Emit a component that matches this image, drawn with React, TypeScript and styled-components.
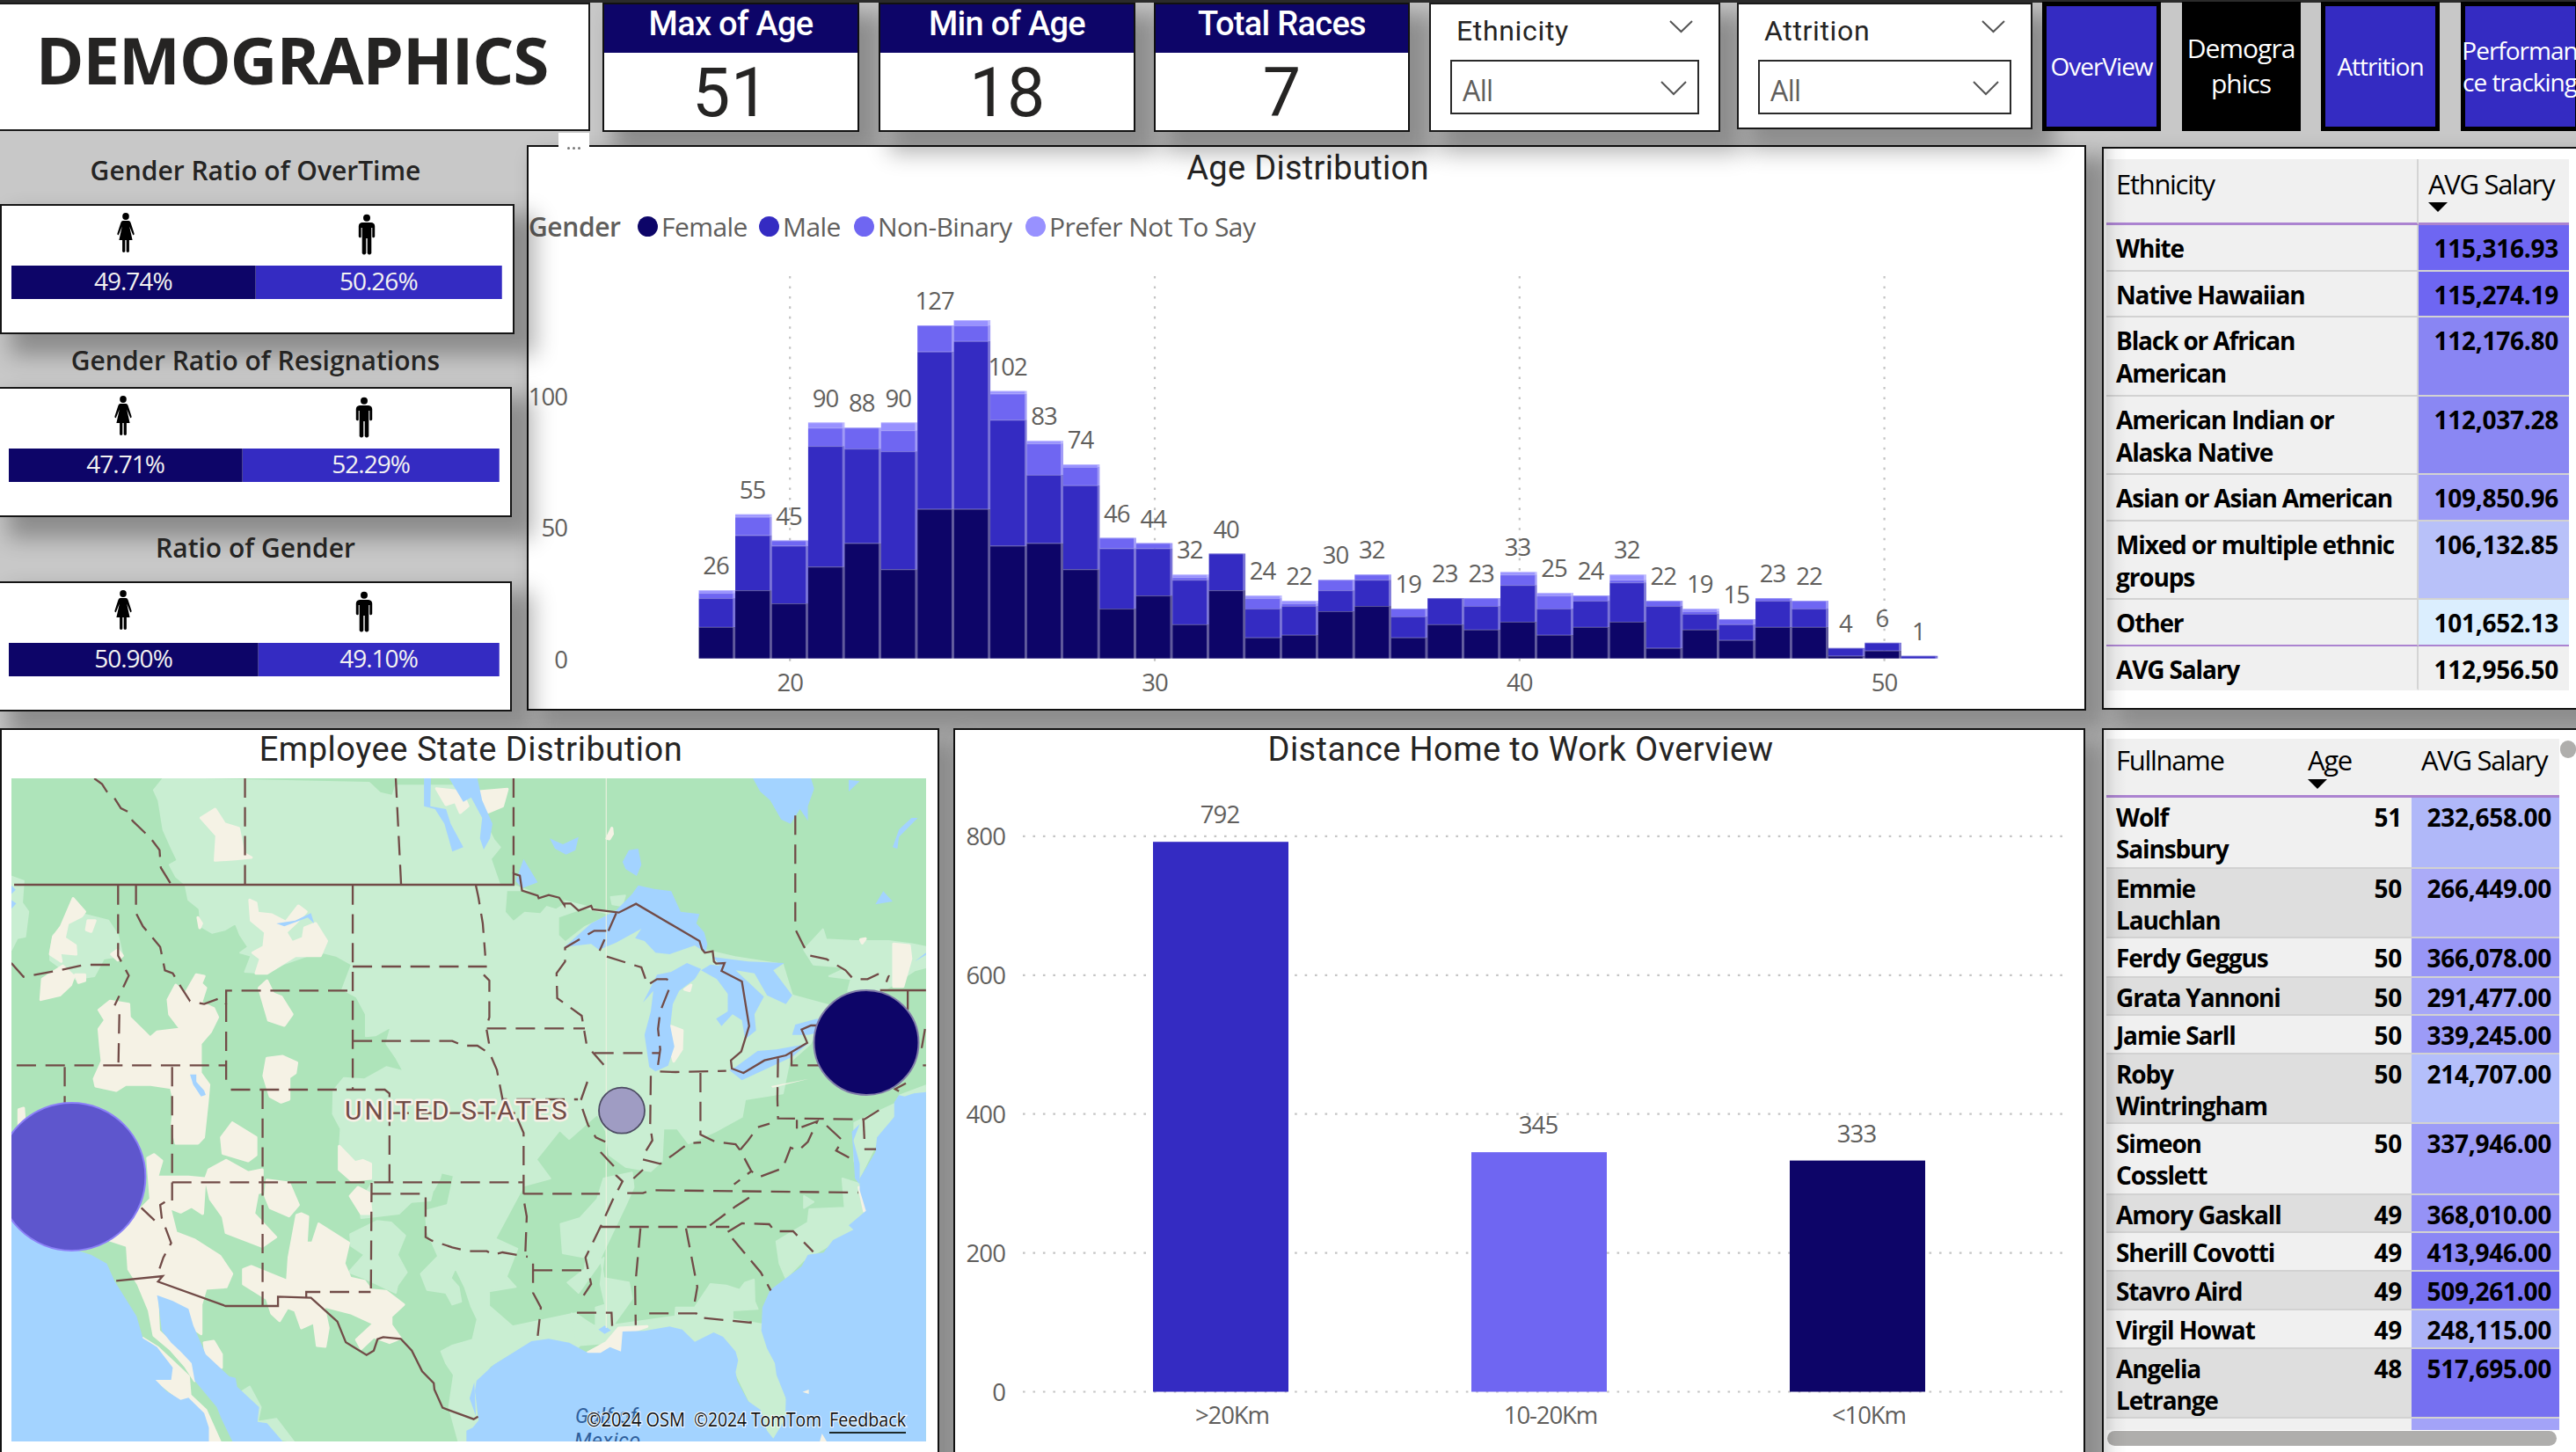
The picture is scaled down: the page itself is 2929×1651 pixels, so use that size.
import React from 'react';
import styled, { createGlobalStyle } from 'styled-components';

const UI = '"Open Sans", "Noto Sans", sans-serif';
const DIN = 'Roboto, "Liberation Sans", sans-serif';
const NAVY = '#0d0568';
const BLUE = '#342bc2';
const VIOLET = '#6f66f2';
const LILAC = '#9891ff';
const SHADOW = '18px 18px 24px 6px rgba(0, 0, 0, 0.3)';

const GlobalStyle = createGlobalStyle`
  html, body { margin: 0; padding: 0; overflow: hidden; }
  * { box-sizing: border-box; }
`;

const Page = styled.div`
  display: flex;
  flex-direction: column;
  width: 2929px;
  height: 1651px;
  overflow: hidden;
  background: #c8c8c8;
  font-family: ${UI};
  color: #252423;
`;

const TopStrip = styled.div`
  height: 3px;
  flex: none;
  background: #2b2b2b;
  position: relative;
  z-index: 5;
`;

const TopRow = styled.header`
  display: flex;
  align-items: flex-start;
  height: 163px;
  flex: none;
`;

const PageTitle = styled.h1`
  position: relative;
  z-index: 2;
  flex: none;
  margin: 0 14px 0 -2px;
  padding-right: 5px;
  width: 673px;
  height: 146px;
  border: 2px solid #1a1a1a;
  background: #fff;
  text-align: center;
  font-size: 74px;
  font-weight: 700;
  line-height: 126px;
  letter-spacing: -0.95px;
`;

const Card = styled.section<{ $width: number; $gap: number; $z: number }>`
  position: relative;
  z-index: ${(p) => p.$z};
  flex: none;
  width: ${(p) => p.$width}px;
  height: 147px;
  margin-right: ${(p) => p.$gap}px;
  border: 2px solid #111;
  background: #fff;
  box-shadow: ${SHADOW};
  font-family: ${DIN};
  text-align: center;
`;

const CardHeader = styled.div`
  height: 55px;
  background: ${NAVY};
  color: #fff;
  font-size: 38px;
  font-weight: 500;
  line-height: 44px;
  letter-spacing: -0.7px;
`;

const CardValue = styled.div<{ $spacing: number }>`
  font-size: 77px;
  line-height: 92px;
  height: 86px;
  letter-spacing: ${(p) => p.$spacing}px;
`;

const SlicerBox = styled.section<{ $width: number; $height: number; $gap: number }>`
  position: relative;
  z-index: 4;
  flex: none;
  width: ${(p) => p.$width}px;
  height: ${(p) => p.$height}px;
  margin-right: ${(p) => p.$gap}px;
  padding: 0 22px;
  border: 2px solid #1a1a1a;
  background: #fff;
  box-shadow: ${SHADOW};
`;

const SlicerHead = styled.div`
  display: flex;
  justify-content: space-between;
  align-items: center;
  height: 60px;
  padding: 0 7px 0 7px;
  font-family: ${DIN};
  font-size: 32px;
  line-height: 60px;
  letter-spacing: 0.66px;
  svg {
    margin-bottom: 10px;
  }
`;

const Select = styled.div`
  display: flex;
  justify-content: space-between;
  align-items: center;
  height: 62px;
  margin-top: 3px;
  padding: 6px 12px 0 12px;
  border: 2px solid #2a2a2a;
  color: #605e5c;
  font-size: 32px;
  letter-spacing: -0.6px;
  svg {
    margin-bottom: 3px;
  }
`;

const NavButton = styled.button<{ $active?: boolean; $size: number; $leading: number }>`
  position: relative;
  z-index: 5;
  flex: none;
  width: 135px;
  height: 147px;
  margin: 0 23.5px 0 0;
  padding: 0 0 1px;
  margin-top: -1px;
  border: 5px solid #000;
  background: ${(p) => (p.$active ? '#000' : BLUE)};
  color: #fff;
  display: flex;
  justify-content: center;
  align-items: center;
  font-family: ${UI};
  font-size: ${(p) => p.$size}px;
  line-height: ${(p) => p.$leading}px;
  letter-spacing: -1px;
  text-align: center;
  white-space: pre;
`;

const MiddleRow = styled.div`
  display: flex;
  align-items: flex-start;
  height: 662px;
  flex: none;
`;

const BottomRow = styled.div`
  display: flex;
  align-items: flex-start;
  height: 830px;
  flex: none;
  position: relative;
  z-index: 3;
`;

const GenderColumn = styled.div`
  position: relative;
  z-index: 1;
  flex: none;
  width: 599px;
  display: flex;
  flex-direction: column;
`;

const RatioTitle = styled.h2<{ $height: number; $top: number }>`
  margin: 0;
  width: 581px;
  height: ${(p) => p.$height}px;
  padding-top: ${(p) => p.$top}px;
  font-size: 30px;
  font-weight: 600;
  line-height: 40px;
  text-align: center;
  position: relative;
  z-index: 1;
`;

const RatioBox = styled.div<{ $shift: number }>`
  margin-left: ${(p) => p.$shift}px;
  width: 585px;
  height: 148px;
  padding: 8px 12px 0 11px;
  border: 2px solid #151515;
  background: #fff;
  box-shadow: ${SHADOW};
`;

const IconRow = styled.div`
  display: flex;
  align-items: flex-start;
  gap: 254px;
  height: 60px;
  padding-left: 120px;
`;

const RatioBar = styled.div`
  display: flex;
  height: 38px;
`;

const RatioPart = styled.div<{ $color: string }>`
  background: ${(p) => p.$color};
  color: #f3f2f1;
  font-size: 28px;
  line-height: 35px;
  letter-spacing: -1px;
  text-align: center;
  border-right: 1px solid rgba(255, 255, 255, 0.25);
`;

const Panel = styled.section<{ $width: number; $height: number; $gap?: number; $top?: number }>`
  position: relative;
  z-index: 0;
  flex: none;
  width: ${(p) => p.$width}px;
  height: ${(p) => p.$height}px;
  margin-right: ${(p) => p.$gap ?? 0}px;
  margin-top: ${(p) => p.$top ?? 0}px;
  border: 2px solid #111;
  background: #fff;
  box-shadow: ${SHADOW};
`;

const PanelTitle = styled.h2<{ $spacing: number; $leading?: number }>`
  margin: 0 0 0 3px;
  font-family: ${DIN};
  font-size: 38px;
  font-weight: 400;
  line-height: ${(p) => p.$leading ?? 45}px;
  letter-spacing: ${(p) => p.$spacing}px;
  text-align: center;
`;

const Legend = styled.div`
  display: flex;
  align-items: center;
  height: 55px;
  margin-top: 14px;
  font-size: 30px;
  color: #605e5c;
  letter-spacing: -0.55px;
  white-space: pre;
`;

const LegendTitle = styled.span`
  width: 124px;
  font-weight: 600;
  letter-spacing: -0.4px;
`;

const LegendItem = styled.span<{ $width: number; $color: string }>`
  display: flex;
  align-items: center;
  gap: 4px;
  width: ${(p) => p.$width}px;
  &::before {
    content: '';
    width: 23px;
    height: 23px;
    border-radius: 50%;
    background: ${(p) => p.$color};
  }
`;

const Chart = styled.svg`
  display: block;
  font-family: ${UI};
  font-size: 27.5px;
  fill: #605e5c;
`;

const MapSvg = styled.svg`
  display: block;
  margin: 10px 0 0 11px;
`;

const MoreButton = styled.div`
  position: absolute;
  z-index: 6;
  left: 635px;
  top: 151px;
  width: 35px;
  height: 36px;
  background: #fff;
  display: flex;
  justify-content: center;
  align-items: center;
  padding-bottom: 2px;
  gap: 3px;
`;

const Dot = styled.i`
  width: 3px;
  height: 3px;
  border-radius: 50%;
  background: #777;
`;

const Table = styled.div<{ $cols: string; $width: number; $height: number; $top: number }>`
  display: grid;
  grid-template-columns: ${(p) => p.$cols};
  align-content: start;
  width: ${(p) => p.$width}px;
  height: ${(p) => p.$height}px;
  margin: ${(p) => p.$top}px 0 0 3px;
  overflow: hidden;
  color: #000;
`;

const HeadCell = styled.div<{ $height: number; $leading: number; $divider?: boolean }>`
  height: ${(p) => p.$height}px;
  padding-left: 11px;
  border-bottom: 3px solid #ab83d0;
  border-right: ${(p) => (p.$divider ? '2px solid #d4d4d4' : '0')};
  background: #f0f0f0;
  font-size: 31px;
  line-height: ${(p) => p.$leading}px;
  letter-spacing: -1.3px;
  white-space: nowrap;
`;

const SortArrow = styled.i<{ $pull: number }>`
  display: block;
  width: 0;
  margin-top: ${(p) => p.$pull}px;
  border: 11px solid transparent;
  border-top-color: #000;
  border-bottom-width: 0;
`;

const Cell = styled.div<{
  $height: number;
  $leading: number;
  $top: number;
  $bg: string;
  $right?: number;
  $divider?: boolean;
  $line?: string;
}>`
  height: ${(p) => p.$height}px;
  padding: ${(p) => p.$top}px ${(p) => p.$right ?? 0}px 0 ${(p) => (p.$right ? 0 : 11)}px;
  border-bottom: 2px solid ${(p) => p.$line ?? '#d2d2d2'};
  border-right: ${(p) => (p.$divider ? '2px solid #d4d4d4' : '0')};
  background: ${(p) => p.$bg};
  font-size: 28px;
  font-weight: 700;
  line-height: ${(p) => p.$leading}px;
  letter-spacing: ${(p) => (p.$right ? -0.25 : -1.15)}px;
  text-align: ${(p) => (p.$right ? 'right' : 'left')};
  white-space: pre;
  overflow: hidden;
`;

const ScrollX = styled.div`
  width: 511px;
  height: 17px;
  margin: 1px 0 0 4px;
  border-radius: 9px;
  background: #afaeac;
`;

const ScrollDot = styled.div`
  position: absolute;
  left: 519px;
  top: 12px;
  width: 18px;
  height: 20px;
  border-radius: 9px;
  background: #afaeac;
`;

/* Shade that the neighbouring visual casts over a table's left edge */
const EdgeShade = styled.div`
  position: absolute;
  left: 0;
  top: 0;
  bottom: 0;
  width: 26px;
  background: linear-gradient(to right, rgba(0, 0, 0, 0.14), rgba(0, 0, 0, 0.04) 50%, rgba(0, 0, 0, 0));
`;

const Chevron = ({ w, h }: { w: number; h: number }) => (
  <svg width={w} height={h} viewBox={`0 0 ${w} ${h}`}>
    <path d={`M1 1 L${w / 2} ${h - 2} L${w - 1} 1`} fill="none" stroke="#555" strokeWidth="2" />
  </svg>
);

const Woman = () => (
  <svg width="20" height="46" viewBox="0 0 20 46">
    <ellipse cx="10" cy="4" rx="3.8" ry="3.9" />
    <path d="M6.6 9 H13.4 Q15.2 9.4 15.7 11.5 L19.6 23.5 Q19.8 25.4 18.2 25.2 L14.2 15.5 L17.6 31 H13.9 V44 Q12.3 46 10.7 44 V31 H9.3 V44 Q7.7 46 6.1 44 V31 H2.4 L5.8 15.5 L1.8 25.2 Q.2 25.4 .4 23.5 L4.3 11.5 Q4.8 9.4 6.6 9Z" />
  </svg>
);

const Man = () => (
  <svg width="20" height="49" viewBox="0 0 20 49">
    <ellipse cx="10" cy="5.8" rx="4" ry="4" />
    <path d="M5 11 H15 Q19 11.4 19.2 15 V27 Q18 29.4 16.3 27.4 V17 H15.3 V46 Q13 49 10.7 46 V29 H9.3 V46 Q7 49 4.7 46 V17 H3.7 V27.4 Q2 29.4 .8 27 V15 Q1 11.4 5 11Z" />
  </svg>
);

const Slicer = ({ name, width, height, gap }: { name: string; width: number; height: number; gap: number }) => (
  <SlicerBox $width={width} $height={height} $gap={gap}>
    <SlicerHead>
      {name}
      <Chevron w={27} h={15} />
    </SlicerHead>
    <Select>
      All
      <Chevron w={30} h={17} />
    </Select>
  </SlicerBox>
);

const Ratio = ({ title, female, male, height, top, shift }: {
  title: string; female: number; male: number; height: number; top: number; shift: number;
}) => (
  <>
    <RatioTitle $height={height} $top={top}>{title}</RatioTitle>
    <RatioBox $shift={shift}>
      <IconRow><Woman /><Man /></IconRow>
      <RatioBar>
        <RatioPart $color={NAVY} style={{ width: `${female}%` }}>{female.toFixed(2)}%</RatioPart>
        <RatioPart $color={BLUE} style={{ width: `${male}%` }}>{male.toFixed(2)}%</RatioPart>
      </RatioBar>
    </RatioBox>
  </>
);

/* Cumulative counts per age: female, + male, + non-binary, + prefer not to say */
const AGES: [number, number, number, number][] = [
  [12, 23, 25, 26], [26, 47, 54, 55], [21, 43, 45, 45], [35, 81, 88, 90], [44, 80, 88, 88], [34, 79, 87, 90],
  [57, 117, 127, 127], [57, 121, 127, 129], [43, 91, 101, 102], [44, 70, 82, 83], [34, 66, 73, 74], [19, 42, 46, 46],
  [24, 42, 44, 44], [13, 30, 31, 32], [26, 40, 40, 40], [8, 19, 23, 24], [9, 20, 21, 22], [18, 26, 30, 30],
  [20, 30, 32, 32], [8, 16, 19, 19], [13, 23, 23, 23], [11, 20, 23, 23], [14, 28, 32, 33], [9, 19, 24, 25],
  [12, 22, 24, 24], [14, 29, 30, 32], [4, 20, 22, 22], [11, 17, 18, 19], [7, 13, 15, 15], [12, 22, 23, 23],
  [12, 19, 22, 22], [1, 4, 4, 4], [3, 6, 6, 6], [0, 1, 1, 1],
];

const AgeChart = () => {
  const step = 41.48;
  const base = 748.7;
  const unit = 2.982;
  const colors = [NAVY, BLUE, VIOLET, LILAC];
  return (
    <Chart width="1769" height="518" viewBox="601 285 1769 518" letterSpacing="-1">
      {[20, 30, 40, 50].map((a) => {
        const x = 898.2 + (a - 20) * step;
        return (
          <g key={a}>
            <line x1={x} x2={x} y1="314" y2="755" stroke="#c4c4c4" strokeWidth="2.2" strokeDasharray="2.6 8.85" />
            <text x={x} y="786" textAnchor="middle">{a}</text>
          </g>
        );
      })}
      {[0, 50, 100].map((v) => (
        <text key={v} x="645" y={759.5 - v * unit} textAnchor="end">{v}</text>
      ))}
      {AGES.map((row, i) => {
        const x = 794.6 + i * 41.43;
        return (
          <g key={i}>
            {row.map((top, k) => {
              const from = k ? row[k - 1] : 0;
              const h = (top - from) * unit;
              if (!h) return null;
              const y = base - top * unit;
              return (
                <g key={k} fill={colors[k]}>
                  <rect x={x + 39} y={y} width="2.5" height={h} opacity="0.66" />
                  <rect x={x} y={y} width="39" height={h} />
                  <rect x={x} y={y} width="39" height="1" fill="#fff" opacity="0.3" />
                </g>
              );
            })}
            {i !== 7 && (
              <text x={x + 19.5} y={base - row[3] * unit - 17.8} textAnchor="middle">{row[3]}</text>
            )}
          </g>
        );
      })}
    </Chart>
  );
};

const DISTANCES = [
  { label: '>20Km', value: 792, x: 1311, color: BLUE },
  { label: '10-20Km', value: 345, x: 1673, color: VIOLET },
  { label: '<10Km', value: 333, x: 2035, color: NAVY },
];

const DistanceChart = () => {
  const base = 1582.5;
  const unit = 0.7895;
  return (
    <Chart width="1283" height="774" viewBox="1086 875 1283 774" letterSpacing="-0.9">
      {[0, 200, 400, 600, 800].map((v) => {
        const y = base - v * unit;
        return (
          <g key={v}>
            <line x1="1163" x2="2350" y1={y} y2={y} stroke="#c4c4c4" strokeWidth="2.2" strokeDasharray="2.6 8.85" />
            <text x="1143" y={y + 10} textAnchor="end">{v}</text>
          </g>
        );
      })}
      {DISTANCES.map((d) => {
        const top = base - d.value * unit;
        return (
          <g key={d.label}>
            <rect x={d.x} y={top} width="154" height={base - top} fill={d.color} />
            <text x={d.x + 76} y={top - 21} textAnchor="middle">{d.value}</text>
            <text x={d.x + 90} y="1619" textAnchor="middle" letterSpacing="-1.1">{d.label}</text>
          </g>
        );
      })}
    </Chart>
  );
};

/* Land cover, water and borders share one grid, scaled into map pixels. */
const LIGHT_LAND = [
  'M520 195 L490 235 505 270 520 370 545 430 565 475 540 490 560 530 590 557 600 610 635 640 640 700 675 722 715 712 750 690 765 730 790 770 765 790 800 800 780 855 850 860 900 830 980 800 1030 790 1070 800 1120 830 1090 915 1135 940 1165 1000 1165 1075 1195 1072 1245 1042 1230 1100 1262 1150 1285 1195 1230 1180 1160 1222 1095 1217 1062 1260 1060 1340 1085 1390 1080 1480 1130 1540 1200 1570 1300 1580 1380 1600 1400 1560 1405 1540 1445 1550 1425 1650 1355 1670 1360 1740 1395 1825 1340 1885 1360 1940 1420 1950 1440 1990 1468 1980 1460 1930 1435 1900 1450 1865 1480 1930 1500 1995 1520 2040 1505 2110 1440 2130 1405 2150 1420 2190 1445 2230 1430 2340 1460 2457 1540 2457 1518 2370 1512 2280 1560 2200 1690 2115 1830 2150 1892 2065 1832 2020 1632 2065 1557 1995 1557 1945 1642 1930 1612 1895 1647 1800 1577 1765 1667 1585 1752 1560 1707 1495 1782 1395 1812 1425 1902 1340 1930 1400 1940 1480 1992 1520 2072 1535 2107 1500 2112 1390 2157 1390 2192 1440 2277 1400 2362 1350 2372 1290 2492 1270 2512 1165 2580 1100 2640 970 2522 935 2492 830 2340 805 2240 780 2150 660 2020 660 1932 650 1712 590 1635 560 1590 557 1562 470 1592 430 1572 405 1532 320 1512 220 1260 220 1250 255 1210 245 1175 210Z',
  'M160 790 L170 730 270 660 345 680 375 730 390 800 330 810 300 870 240 880 160 815Z M36 530 L75 545 70 620 90 650 80 735 55 740 36 780Z',
  'M1115 1750 L1200 1705 1245 1710 1290 1755 1265 1820 1295 1880 1265 1925 1260 1950 1160 1900 1110 1880 1160 1820 1118 1790Z M1185 1575 L1380 1590 1370 1635 1310 1640 1270 1680 1150 1695 1145 1640Z',
  'M765 2290 L795 2270 830 2340 820 2390 880 2380 935 2457 820 2440Z',
  'M2012 1540 L1922 1560 1902 1630 1847 1695 1785 1715 1792 1815 1867 1830 1862 1870 1807 1915 1842 1950 1922 1830 1912 1920 1927 1990 1897 2000 1897 2065 1820 2020 1830 2130 2060 2110 2300 2130 2450 2460 2520 2400 2440 2060 2332 2040 2332 2010 2412 2005 2402 1980 2400 1905 2372 1915 2355 1940 2312 1925 2262 1920 2212 2000 2152 2000 2150 2030 1952 2060 2012 1970 2002 1915 1922 1900 1912 1830 1992 1650 2017 1590Z',
  'M2742 1580 L2682 1560 2690 1660 2577 1665 2572 1710 2472 1775 2482 1850 2502 1900 2557 1840 2622 1800 2712 1740 2757 1670Z M2560 1620 L2590 1640 2560 1660Z',
  'M2560 780 L2620 710 2630 745 2720 750 2830 750 2900 760 2948 770 2948 840 2912 850 2812 920 2700 920 2710 880 2640 870 2700 840 2590 830Z M1945 600 L1990 595 1980 630 1950 625Z',
  'M2860 1300 L2720 1370 2720 1500 2735 1560 2800 1420 2850 1340 2948 1270 2948 1250Z',
];
const DARK_LAND = [
  'M1512 230 L1635 195 1512 195Z M1615 580 L1700 580 1790 600 1800 620 1770 640 1740 630 1720 655 1670 650 1635 680 1610 650Z M1780 670 L1860 640 1940 660 1860 700 1800 750 1780 730Z',
];
const BEIGE_LAND = [
  'M350 955 L410 965 412 1010 478 1080 500 1060 575 1050 540 1000 535 950 560 900 590 930 625 865 650 870 640 895 655 910 640 960 680 980 693 1010 670 1060 638 1100 638 1200 665 1240 660 1300 648 1420 630 1440 560 1440 548 1380 555 1300 545 1250 480 1240 400 1240 370 1260 305 1245 300 1220 325 1160 320 1110 315 1050 335 1020 315 985Z',
  'M233 605 L270 650 260 665 215 690 205 740 240 765 242 795 190 790 195 820 160 795 170 735 195 700Z M280 680 L303 680 290 718 275 712Z M130 950 L135 880 200 835 235 870 225 900 190 935Z M240 865 L270 865 270 885 250 892Z M355 795 L375 780 390 800 375 815Z',
  'M640 330 L685 300 715 350 760 365 775 450 800 465 750 470 685 475 690 390Z M630 670 L642 690 636 705Z',
  'M795 610 L815 620 820 655 865 660 910 685 950 630 975 650 940 690 910 720 930 755 965 740 970 705 1005 690 1040 750 1020 800 940 800 850 860 815 860 830 810 805 790 840 770 845 720 800 680Z',
  'M850 885 L870 930 895 940 930 1000 905 1038 855 1020 825 910Z M850 1150 L900 1143 945 1165 940 1200 920 1215 920 1290 895 1300 860 1280 840 1210Z',
  'M740 1370 L815 1420 815 1480 790 1500 710 1475 705 1420Z',
  'M720 1498 L790 1540 835 1530 835 1605 820 1610 808 1680 878 1760 835 1792 720 1745 710 1690 670 1630 655 1560 665 1530Z M850 1565 L920 1575 950 1650 920 1688 860 1660 845 1620Z',
  'M470 1490 L490 1478 515 1500 500 1555 600 1555 652 1560 645 1680 610 1655 575 1675 540 1660 560 1745 620 1770 700 1825 738 1885 720 1930 655 1935 640 1990 640 2090 600 2060 550 1985 500 1958 505 2080 560 2135 615 2200 620 2250 590 2200 545 2145 490 2095 475 2010 440 1920 410 1870 405 1790 350 1770 480 1630Z',
  'M650 2120 L680 2115 705 2160 705 2205 655 2160Z M60 1325 L75 1320 78 1370 60 1380Z',
  'M775 1870 L800 1860 915 1910 920 1830 945 1685 960 1680 980 1690 975 1780 995 1780 1015 1715 1110 1780 1095 1850 1115 1900 1160 1910 1180 1940 1230 1945 1285 1990 1245 2030 1245 2060 1275 2105 1240 2120 1190 2100 1150 2140 1135 2110 1190 2055 1120 2020 1030 1995 1045 2070 1035 2133 1010 2130 1000 2050 960 2070 940 2010 915 2000 890 2045 865 2020 850 1970 775 1920Z',
  'M1080 1450 L1130 1505 1155 1498 1180 1510 1180 1560 1120 1567 1080 1530Z M1115 1620 L1140 1590 1175 1610 1182 1680 1150 1680Z',
  'M455 2105 L500 2135 545 2180 600 2235 605 2300 655 2350 700 2457 660 2457 650 2360 600 2310 575 2315 495 2247 550 2240 550 2205 500 2140Z',
  'M1390 230 L1470 240 1490 290 1465 312 1450 275 1420 285Z M1525 240 L1615 232 1600 290 1555 310Z M2845 760 L2895 765 2900 810 2875 905 2845 905Z M2135 1040 L2172 1055 2170 1120 2145 1160 2130 1100Z M1932 400 L1948 365 1950 385 1940 402Z M2180 915 L2200 900 2195 920Z M2740 745 L2755 742 2745 757Z',
  'M1870 2155 L1930 2120 1970 2070 2060 2065 1990 2090 1985 2160 1940 2140 1900 2160Z M2735 1590 L2760 1665 2752 1672Z',
];
const WATER = [
  'M2948 1265 L2862 1275 2847 1300 2847 1350 2792 1420 2787 1470 2737 1560 2737 1600 2757 1670 2702 1720 2717 1735 2652 1770 2622 1813 2572 1820 2552 1860 2452 1940 2427 2000 2424 2080 2442 2140 2467 2190 2472 2230 2502 2310 2500 2380 2462 2447 2442 2420 2422 2350 2382 2320 2347 2250 2342 2220 2350 2180 2342 2150 2302 2100 2272 2085 2212 2117 2172 2075 2132 2065 2052 2080 1982 2082 1977 2150 1942 2135 1912 2155 1872 2155 1812 2120 1747 2107 1692 2115 1572 2195 1517 2250 1512 2285 1524 2385 1505 2410 1485 2420 1485 2457 2948 2457Z',
  'M36 1690 L130 1770 230 1800 290 1820 340 1850 365 1910 400 1970 435 2030 455 2105 500 2135 550 2205 545 2247 495 2247 530 2285 575 2315 600 2308 650 2360 665 2410 665 2457 36 2457Z',
  'M500 1958 L550 1978 600 2005 615 2060 655 2160 700 2205 730 2235 750 2240 755 2270 825 2340 820 2390 850 2395 900 2457 740 2457 705 2380 690 2340 620 2250 610 2190 575 2150 545 2120 515 2080 505 1990Z',
  'M1797 770 L1882 690 1962 645 2012 590 2032 560 2082 572 2137 580 2167 650 2227 658 2217 690 2242 720 2252 760 2247 790 2212 765 2132 795 2087 790 2052 750 2022 740 2042 708 1962 755 1907 780 1882 760Z',
  'M2047 960 L2092 865 2137 855 2187 825 2232 845 2212 880 2162 920 2142 965 2134 1040 2147 1110 2127 1175 2087 1195 2067 1180 2052 1070 2072 990 2080 920Z',
  'M2232 850 L2262 830 2292 835 2272 805 2382 820 2497 825 2462 850 2522 935 2502 965 2442 935 2402 860 2342 850 2372 880 2432 940 2402 1000 2407 1055 2372 1085 2362 1020 2332 1000 2297 1040 2280 1015 2317 990 2317 930 2282 880Z',
  'M2322 1190 L2342 1180 2412 1125 2472 1120 2572 1100 2522 1145 2362 1225Z M2522 1070 L2532 1035 2602 1015 2662 1050 2572 1070Z',
  'M2397 195 L2582 195 2592 230 2572 290 2572 340 2547 300 2517 350 2487 335 2452 270 2420 240Z',
  'M1430 195 L1520 195 1535 270 1568 350 1560 400 1540 438 1528 400 1535 330 1500 260 1475 275Z M1350 195 L1372 195 1370 290 1420 300 1435 350 1475 430 1440 445 1415 350 1385 300 1350 290Z',
  'M1750 400 L1792 420 1842 395 1832 440 1802 455 1767 435Z M2002 440 L2032 435 2042 490 2027 528 1992 505 1982 480Z M1667 470 L1712 550 1662 570 1642 545Z M2922 330 L2862 395 2857 435 2842 430 2862 370 2902 330Z M2812 580 L2842 615 2787 625Z M2702 200 L2737 205 2702 240Z M2912 820 L2948 790 2948 797Z',
  'M880 690 L940 680 990 655 1000 690 980 670 905 700Z M605 1205 L625 1205 625 1230 650 1260 655 1275 640 1280 615 1240Z M36 560 L50 575 36 590Z M36 610 L52 622 36 640Z M2737 1375 L2712 1400 2717 1480 2722 1560 2737 1580 2737 1510 2717 1430Z M1905 2075 L1925 2062 1945 2078 1925 2090Z M1510 2255 L1495 2310 1515 2370Z',
];
const COUNTRY_BORDERS = [
  'M45 558 H1635 V520 L1655 527 1662 578 1712 595 1715 604 1747 593 1780 602 1797 628 1797 622 1817 622 1842 646 1882 630 1887 642 1970 653 2025 623 2227 750 2235 778 2244 790 2269 785 2273 820 2280 827 2307 825 2297 852 2362 888 2385 1040 2360 1127 2327 1157 2330 1185 2367 1200 2434 1157 2502 1140 2570 1097 2552 1052 2582 1038 2642 1038 M2802 918 H2948',
  'M370 1909 L518 1893 503 1912 718 1995 H885 V1963 L990 1967 1074 2048 1101 2119 1167 2162 1190 2147 1202 2108 1220 2101 1276 2107 1311 2147 1344 2218 1381 2258 1383 2280 1409 2342 1508 2381 1522 2372',
];
const STATE_BORDERS = [
  'M300 195 L325 215 340 240 360 255 385 297 410 310 422 340 480 400 508 440 512 500 545 557',
  'M780 195 V557', 'M1260 195 L1277 557', 'M1635 195 V520',
  'M376 560 V800 L410 868 365 970', 'M380 1000 L377 1170',
  'M433 560 V655 L455 700 510 770 525 850 550 860 575 905 605 955 650 965 700 945 720 965 V1250',
  'M1123 560 V1258', 'M36 825 L75 872 190 850 270 831 H376', 'M720 965 V919 H1123', 'M1123 837 H1550',
  'M1123 1091 H1440 L1475 1107 1520 1107 1560 1135 1582 1190 1600 1290 H1840',
  'M1515 560 L1523 600 1537 690 1545 800', 'M1540 865 L1558 885 V1010 L1548 1045 1557 1100',
  'M53 1174 H720', 'M206 1180 V1305', 'M548 1180 V1635', 'M735 1257 H1225 L1240 1270 V1575', 'M836 1257 V1995',
  'M548 1573 H1665', 'M1183 1575 L1181 1935', 'M975 1965 V1947 H1180', 'M1183 1612 H1355 V1760 L1375 1772 1440 1795 1490 1808 1550 1808 1570 1820 1600 1812 1680 1827',
  'M450 1660 L492 1703', 'M525 1640 L510 1650 515 1695 545 1780 520 1830 508 1867',
  'M1240 1337 H1640', 'M1647 1355 L1667 1405 V1630 L1677 1690 1672 1828', 'M1667 1612 H1910',
  'M1697 1850 V1950 L1722 2000 1712 2097', 'M1697 1873 H1852',
  'M1870 1230 L1847 1300 1872 1377 1897 1420 1927 1435', 'M1912 1470 L1962 1527 1962 1550 1982 1570 1952 1630 1914 1720 1882 1790 1864 1830 1882 1920 1847 1977',
  'M1837 2018 H1947 L1949 2063', 'M1912 1725 H2322', 'M2039 1730 L2022 1930 2024 2060', 'M2184 1730 L2220 1930 2212 1980',
  'M2067 2020 H2217 L2222 2034 2390 2052 2392 2034', 'M2332 1765 L2422 1880 2454 1942', 'M2317 1742 L2362 1713 2449 1716 2467 1740 H2525 L2589 1810',
  'M2260 1720 L2342 1655 2407 1610', 'M1997 1610 H2047 L2072 1600 2732 1608', 'M2017 1560 L2047 1530', 'M2047 1495 L2102 1510 2142 1480 2192 1440 2232 1437',
  'M2230 1200 V1410 L2277 1435 2342 1443 2357 1465 2392 1535 2337 1580', 'M2357 1462 L2382 1430 2412 1385 2450 1373',
  'M2072 1210 L2070 1380 2077 1430 2057 1465', 'M2477 1150 L2475 1290 2477 1355 2752 1358 2809 1320', 'M2749 1360 L2752 1425', 'M2752 1460 H2789',
  'M2632 1380 L2682 1430 2662 1465 2722 1500', 'M2537 1390 V1360', 'M2552 1385 L2602 1365 2572 1435 2542 1465 2517 1455 2492 1525 2417 1555 2392 1535',
  'M2532 322 V710 L2559 768 2579 800 2632 812 2692 850 2717 880 2762 880 2795 863 2829 870 2822 890',
  'M1962 655 L1909 783', 'M1930 715 H1892 L1799 773 V820 L1772 860 1774 945 1807 970 1852 1005 1867 1100', 'M1932 803 L2042 840 2062 900 2092 880 2122 880 2142 893',
  'M2129 917 L2102 990 2095 1050 2102 1120 2092 1195 2152 1197 2312 1193', 'M1550 1048 H1862', 'M1885 1127 L1922 1172', 'M1892 1132 H2102',
  'M2520 1130 V1174 H2948', 'M2890 920 V985', 'M2945 1050 L2935 1112 H2948', 'M2884 1235 L2850 1255 2862 1262',
];

const StateMap = () => (
  <MapSvg width="1040" height="754" viewBox="13 885 1040 754" fontFamily={DIN}>
    <rect x="13" y="885" width="1040" height="754" fill="#aee4ba" />
    <g transform="translate(0 820) scale(0.35714 0.33333)">
      <g fill="#c9eed2" stroke="#c9eed2" strokeWidth="6" strokeLinejoin="round">{LIGHT_LAND.map((d) => <path key={d} d={d} />)}</g>
      <g fill="#aee4ba">{DARK_LAND.map((d) => <path key={d} d={d} />)}</g>
      <g fill="#f5f2e5" stroke="#f5f2e5" strokeWidth="9" strokeLinejoin="round">{BEIGE_LAND.map((d) => <path key={d} d={d} />)}</g>
      <g fill="#a3d3ff">{WATER.map((d) => <path key={d} d={d} />)}</g>
      <path d="M1930 195 V2070" stroke="#eef2e0" strokeWidth="3" />
      <path d="M2455 1245 L2575 1220 2460 1250Z M2555 2288 L2575 2280 2575 2295Z M2610 2457 L2617 2430 2632 2457Z" fill="#f5f2e5" />
      <path d="M2860 1275 L2948 1240 2948 1255 2880 1280Z" fill="#c9eed2" />
      <g fill="none" stroke="#714b47" strokeWidth="2.3">
        {COUNTRY_BORDERS.map((d) => <path key={d} d={d} vectorEffect="non-scaling-stroke" />)}
        {STATE_BORDERS.map((d) => <path key={d} d={d} vectorEffect="non-scaling-stroke" strokeDasharray="22 10.8" />)}
      </g>
    </g>
    <text x="392" y="1273" fontSize="30" letterSpacing="3.1" fill="#714b47" stroke="#f7f0e6" strokeWidth="5" strokeLinejoin="round" paintOrder="stroke">UNITED STATES</text>
    <circle cx="81.4" cy="1338" r="84" fill="#5e56cd" stroke="#8b80f7" strokeWidth="2" />
    <circle cx="707" cy="1262.7" r="26" fill="#9f9cc3" stroke="#4d4c63" strokeWidth="1.8" />
    <circle cx="985" cy="1185.5" r="59.5" fill={NAVY} stroke="#7f7ba8" strokeWidth="2" />
    <g fontSize="23" fontStyle="italic" fill="#2f5f9c" letterSpacing="0.6">
      <text x="654" y="1618">Gulf of</text>
      <text x="653" y="1646">Mexico</text>
    </g>
    <g fontFamily={UI} fontSize="21" fill="#111" stroke="#fff" strokeOpacity="0.75" strokeWidth="2.5" paintOrder="stroke">
      <text x="667" y="1622" textLength="112" lengthAdjust="spacingAndGlyphs">©2024 OSM</text>
      <text x="789" y="1622" textLength="145" lengthAdjust="spacingAndGlyphs">©2024 TomTom</text>
      <text x="943" y="1622" textLength="87" lengthAdjust="spacingAndGlyphs">Feedback</text>
    </g>
    <path d="M943 1629 H1030" stroke="#1d2a2a" strokeWidth="2" />
  </MapSvg>
);

const ETHNICITIES = [
  { name: 'White', value: '115,316.93', h: 53, bg: '#6e66f2' },
  { name: 'Native Hawaiian', value: '115,274.19', h: 52, bg: '#6e66f2' },
  { name: 'Black or African\nAmerican', value: '112,176.80', h: 90, bg: '#8985f3' },
  { name: 'American Indian or\nAlaska Native', value: '112,037.28', h: 89, bg: '#8a87f3' },
  { name: 'Asian or Asian American', value: '109,850.96', h: 53, bg: '#9b9af7' },
  { name: 'Mixed or multiple ethnic\ngroups', value: '106,132.85', h: 89, bg: '#b8c1f9' },
  { name: 'Other', value: '101,652.13', h: 53, bg: '#dbeefe', line: '#ab83d0' },
  { name: 'AVG Salary', value: '112,956.50', h: 50, bg: '#f0f0f0', line: '#f0f0f0' },
];

const EMPLOYEES: [string, number, string, number, string][] = [
  ['Wolf\nSainsbury', 51, '232,658.00', 81, '#b0b8f9'],
  ['Emmie\nLauchlan', 50, '266,449.00', 79, '#ababf8'],
  ['Ferdy Geggus', 50, '366,078.00', 45, '#9896f6'],
  ['Grata Yannoni', 50, '291,477.00', 43, '#a6a7f8'],
  ['Jamie Sarll', 50, '339,245.00', 44, '#9c9bf7'],
  ['Roby\nWintringham', 50, '214,707.00', 79, '#b4bffb'],
  ['Simeon\nCosslett', 50, '337,946.00', 81, '#9d9cf7'],
  ['Amory Gaskall', 49, '368,010.00', 43, '#9592f6'],
  ['Sherill Covotti', 49, '413,946.00', 44, '#8b87f5'],
  ['Stavro Aird', 49, '509,261.00', 44, '#7670f1'],
  ['Virgil Howat', 49, '248,115.00', 44, '#acb3f8'],
  ['Angelia\nLetrange', 48, '517,695.00', 79, '#7670f1'],
  ['', 0, '', 45, '#a3a3f8'],
];

export default function App() {
  return (
    <Page>
      <GlobalStyle />
      <TopStrip />
      <TopRow>
        <PageTitle>DEMOGRAPHICS</PageTitle>
        <Card $width={292} $gap={22} $z={0}>
          <CardHeader>Max of Age</CardHeader>
          <CardValue $spacing={0.7}>51</CardValue>
        </Card>
        <Card $width={292} $gap={21} $z={2}>
          <CardHeader>Min of Age</CardHeader>
          <CardValue $spacing={-0.5}>18</CardValue>
        </Card>
        <Card $width={291} $gap={22} $z={2}>
          <CardHeader>Total Races</CardHeader>
          <CardValue $spacing={0}>7</CardValue>
        </Card>
        <Slicer name="Ethnicity" width={331} height={147} gap={19} />
        <Slicer name="Attrition" width={336} height={144} gap={11} />
        <NavButton $size={28} $leading={37}>OverView</NavButton>
        <NavButton $active $size={30} $leading={40}>{'Demogra\nphics'}</NavButton>
        <NavButton $size={28} $leading={37}>Attrition</NavButton>
        <NavButton $size={28} $leading={36}>{'Performan\nce tracking'}</NavButton>
      </TopRow>
      <MiddleRow>
        <GenderColumn>
          <Ratio title="Gender Ratio of OverTime" female={49.74} male={50.26} height={66} top={8} shift={0} />
          <Ratio title="Gender Ratio of Resignations" female={47.71} male={52.29} height={60} top={10} shift={-3} />
          <Ratio title="Ratio of Gender" female={50.9} male={49.1} height={73} top={15} shift={-3} />
        </GenderColumn>
        <Panel $width={1773} $height={643} $gap={18} $top={-1}>
          <PanelTitle $spacing={0.3} $leading={49}>Age Distribution</PanelTitle>
          <Legend>
            <LegendTitle>Gender</LegendTitle>
            <LegendItem $width={138} $color={NAVY}>Female</LegendItem>
            <LegendItem $width={108} $color={BLUE}>Male</LegendItem>
            <LegendItem $width={195} $color={VIOLET}>Non-Binary</LegendItem>
            <LegendItem $width={270} $color={LILAC}>Prefer Not To Say</LegendItem>
          </Legend>
          <AgeChart />
        </Panel>
        <Panel $width={560} $height={640} $top={1}>
          <Table $cols="355px 171px" $width={526} $height={606} $top={12}>
            <HeadCell $height={75} $leading={57} $divider>Ethnicity</HeadCell>
            <HeadCell $height={75} $leading={57}>
              AVG Salary
              <SortArrow $pull={-8} />
            </HeadCell>
            {ETHNICITIES.map((e) => (
              <React.Fragment key={e.name}>
                <Cell $height={e.h} $leading={37} $top={7.5} $bg="#f0f0f0" $divider $line={e.line}>{e.name}</Cell>
                <Cell $height={e.h} $leading={37} $top={7.5} $bg={e.bg} $right={12} $line={e.line}>{e.value}</Cell>
              </React.Fragment>
            ))}
          </Table>
          <EdgeShade />
        </Panel>
      </MiddleRow>
      <BottomRow>
        <Panel $width={1068} $height={830} $gap={16}>
          <PanelTitle $spacing={0.54}>Employee State Distribution</PanelTitle>
          <StateMap />
        </Panel>
        <Panel $width={1287} $height={830} $gap={19}>
          <PanelTitle $spacing={0.41}>Distance Home to Work Overview</PanelTitle>
          <DistanceChart />
        </Panel>
        <Panel $width={560} $height={830}>
          <Table $cols="218px 129px 168px" $width={515} $height={786} $top={10}>
            <HeadCell $height={67} $leading={49}>Fullname</HeadCell>
            <HeadCell $height={67} $leading={49}>
              Age
              <SortArrow $pull={-3} />
            </HeadCell>
            <HeadCell $height={67} $leading={49}>AVG Salary</HeadCell>
            {EMPLOYEES.map(([name, age, salary, h, color], i) => {
              const bg = i % 2 ? '#dedede' : '#f0f0f0';
              return (
                <React.Fragment key={name}>
                  <Cell $height={h} $leading={36} $top={3.5} $bg={bg}>{name}</Cell>
                  <Cell $height={h} $leading={36} $top={3.5} $bg={bg} $right={11}>{age || ''}</Cell>
                  <Cell $height={h} $leading={36} $top={3.5} $bg={color} $right={9}>{salary}</Cell>
                </React.Fragment>
              );
            })}
          </Table>
          <ScrollX />
          <ScrollDot />
          <EdgeShade />
        </Panel>
      </BottomRow>
      <MoreButton><Dot /><Dot /><Dot /></MoreButton>
    </Page>
  );
}
